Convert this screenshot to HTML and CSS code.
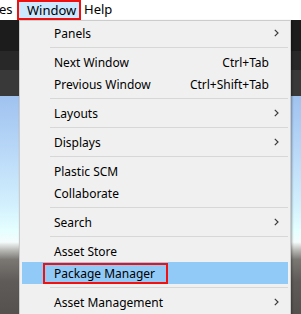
FILE: index.html
```html
<!DOCTYPE html>
<html lang="en">
<head>
  <meta charset="UTF-8">
  <title>Window Menu</title>
  <link rel="stylesheet" href="styles.css">
</head>
<body>
  <div class="menubar">
    <span class="menu-title cut">es</span>
    <span class="menu-title active">Window</span>
    <span class="menu-title help">Help</span>
  </div>

  <div class="scene">
    <div class="band band-dark"></div>
    <div class="band band-mid"></div>
    <div class="band band-light"></div>
    <div class="sky"></div>
  </div>

  <div class="dropdown">
    <div class="item"><span class="label">Panels</span><span class="key"></span><span class="arrow"><svg width="5" height="8" viewBox="0 0 5 8"><polyline points="0.8,0.8 4,4 0.8,7.2" /></svg></span></div>
    <div class="sep"></div>
    <div class="item"><span class="label">Next Window</span><span class="key">Ctrl+Tab</span><span class="arrow"></span></div>
    <div class="item"><span class="label">Previous Window</span><span class="key">Ctrl+Shift+Tab</span><span class="arrow"></span></div>
    <div class="sep"></div>
    <div class="item"><span class="label">Layouts</span><span class="key"></span><span class="arrow"><svg width="5" height="8" viewBox="0 0 5 8"><polyline points="0.8,0.8 4,4 0.8,7.2" /></svg></span></div>
    <div class="sep"></div>
    <div class="item"><span class="label">Displays</span><span class="key"></span><span class="arrow"><svg width="5" height="8" viewBox="0 0 5 8"><polyline points="0.8,0.8 4,4 0.8,7.2" /></svg></span></div>
    <div class="sep"></div>
    <div class="item"><span class="label">Plastic SCM</span><span class="key"></span><span class="arrow"></span></div>
    <div class="item"><span class="label">Collaborate</span><span class="key"></span><span class="arrow"></span></div>
    <div class="sep"></div>
    <div class="item"><span class="label">Search</span><span class="key"></span><span class="arrow"><svg width="5" height="8" viewBox="0 0 5 8"><polyline points="0.8,0.8 4,4 0.8,7.2" /></svg></span></div>
    <div class="sep"></div>
    <div class="item"><span class="label">Asset Store</span><span class="key"></span><span class="arrow"></span></div>
    <div class="item selected"><span class="label">Package Manager</span><span class="key"></span><span class="arrow"></span><span class="mark"></span></div>
    <div class="sep"></div>
    <div class="item"><span class="label">Asset Management</span><span class="key"></span><span class="arrow"><svg width="5" height="8" viewBox="0 0 5 8"><polyline points="0.8,0.8 4,4 0.8,7.2" /></svg></span></div>
  </div>
</body>
</html>
```

FILE: styles.css
```css
:root {
  --menu-bg: #f0f0f0;
  --menu-border: #cccccc;
  --sep-color: #d7d7d7;
  --hover-bg: #91c9f7;
  --mark-red: #f01010;
  --text-color: #000;
}

* {
  margin: 0;
  padding: 0;
  box-sizing: border-box;
}

body {
  width: 301px;
  height: 314px;
  overflow: hidden;
  position: relative;
  font-family: 'Noto Sans', 'Open Sans', sans-serif;
  font-size: 12px;
  color: var(--text-color);
  background: #fff;
}

/* Menu bar */
.menubar {
  height: 20px;
  display: flex;
  align-items: center;
  background: #fff;
  font-size: 13px;
}

.menu-title {
  height: 20px;
  line-height: 19px;
  padding: 0 6px;
}

.menu-title.cut {
  width: 18px;
  padding: 0;
  margin-left: -1px;
}

.menu-title.active {
  width: 64px;
  padding-left: 8px;
  background: #cce8ff;
  border: 2px solid var(--mark-red);
  line-height: 16px;
}

.menu-title.help {
  padding-left: 3px;
}

/* Scene behind the menu */
.scene {
  height: 294px;
}

.band-dark {
  height: 31px;
  background: #1c1c1c;
}

.band-mid {
  height: 19px;
  background: #282828;
}

.band-light {
  height: 26px;
  background: #393939;
}

.sky {
  height: 218px;
  background: linear-gradient(to bottom,
    #9fc2ef 0%,
    #b9d8f8 25%,
    #d2f0fd 50%,
    #e6ffff 62%,
    #f4fbfb 67%,
    #b4b4b0 71%,
    #7b7874 75%,
    #5f5b58 85%,
    #55514e 100%);
}

/* Dropdown */
.dropdown {
  position: absolute;
  left: 19px;
  top: 20px;
  width: 272px;
  padding: 1px 2px 2px;
  background: var(--menu-bg);
  border: 1px solid var(--menu-border);
  box-shadow: 1px 1px 2px rgba(0, 0, 0, 0.35);
}

.item {
  position: relative;
  height: 22px;
  display: grid;
  grid-template-columns: 1fr auto 19px;
  align-items: center;
  padding-left: 32px;
}

.item.selected {
  background: var(--hover-bg);
}

.key {
  text-align: right;
}

.arrow {
  display: flex;
  align-items: center;
  padding-left: 5px;
}

.arrow svg polyline {
  fill: none;
  stroke: #3a3a3a;
  stroke-width: 1.2;
}

.mark {
  position: absolute;
  left: 21px;
  top: 1px;
  width: 125px;
  height: 21px;
  border: 2px solid var(--mark-red);
}

.sep {
  height: 1px;
  margin: 3px 0 3px 28px;
  background: var(--sep-color);
}
```
